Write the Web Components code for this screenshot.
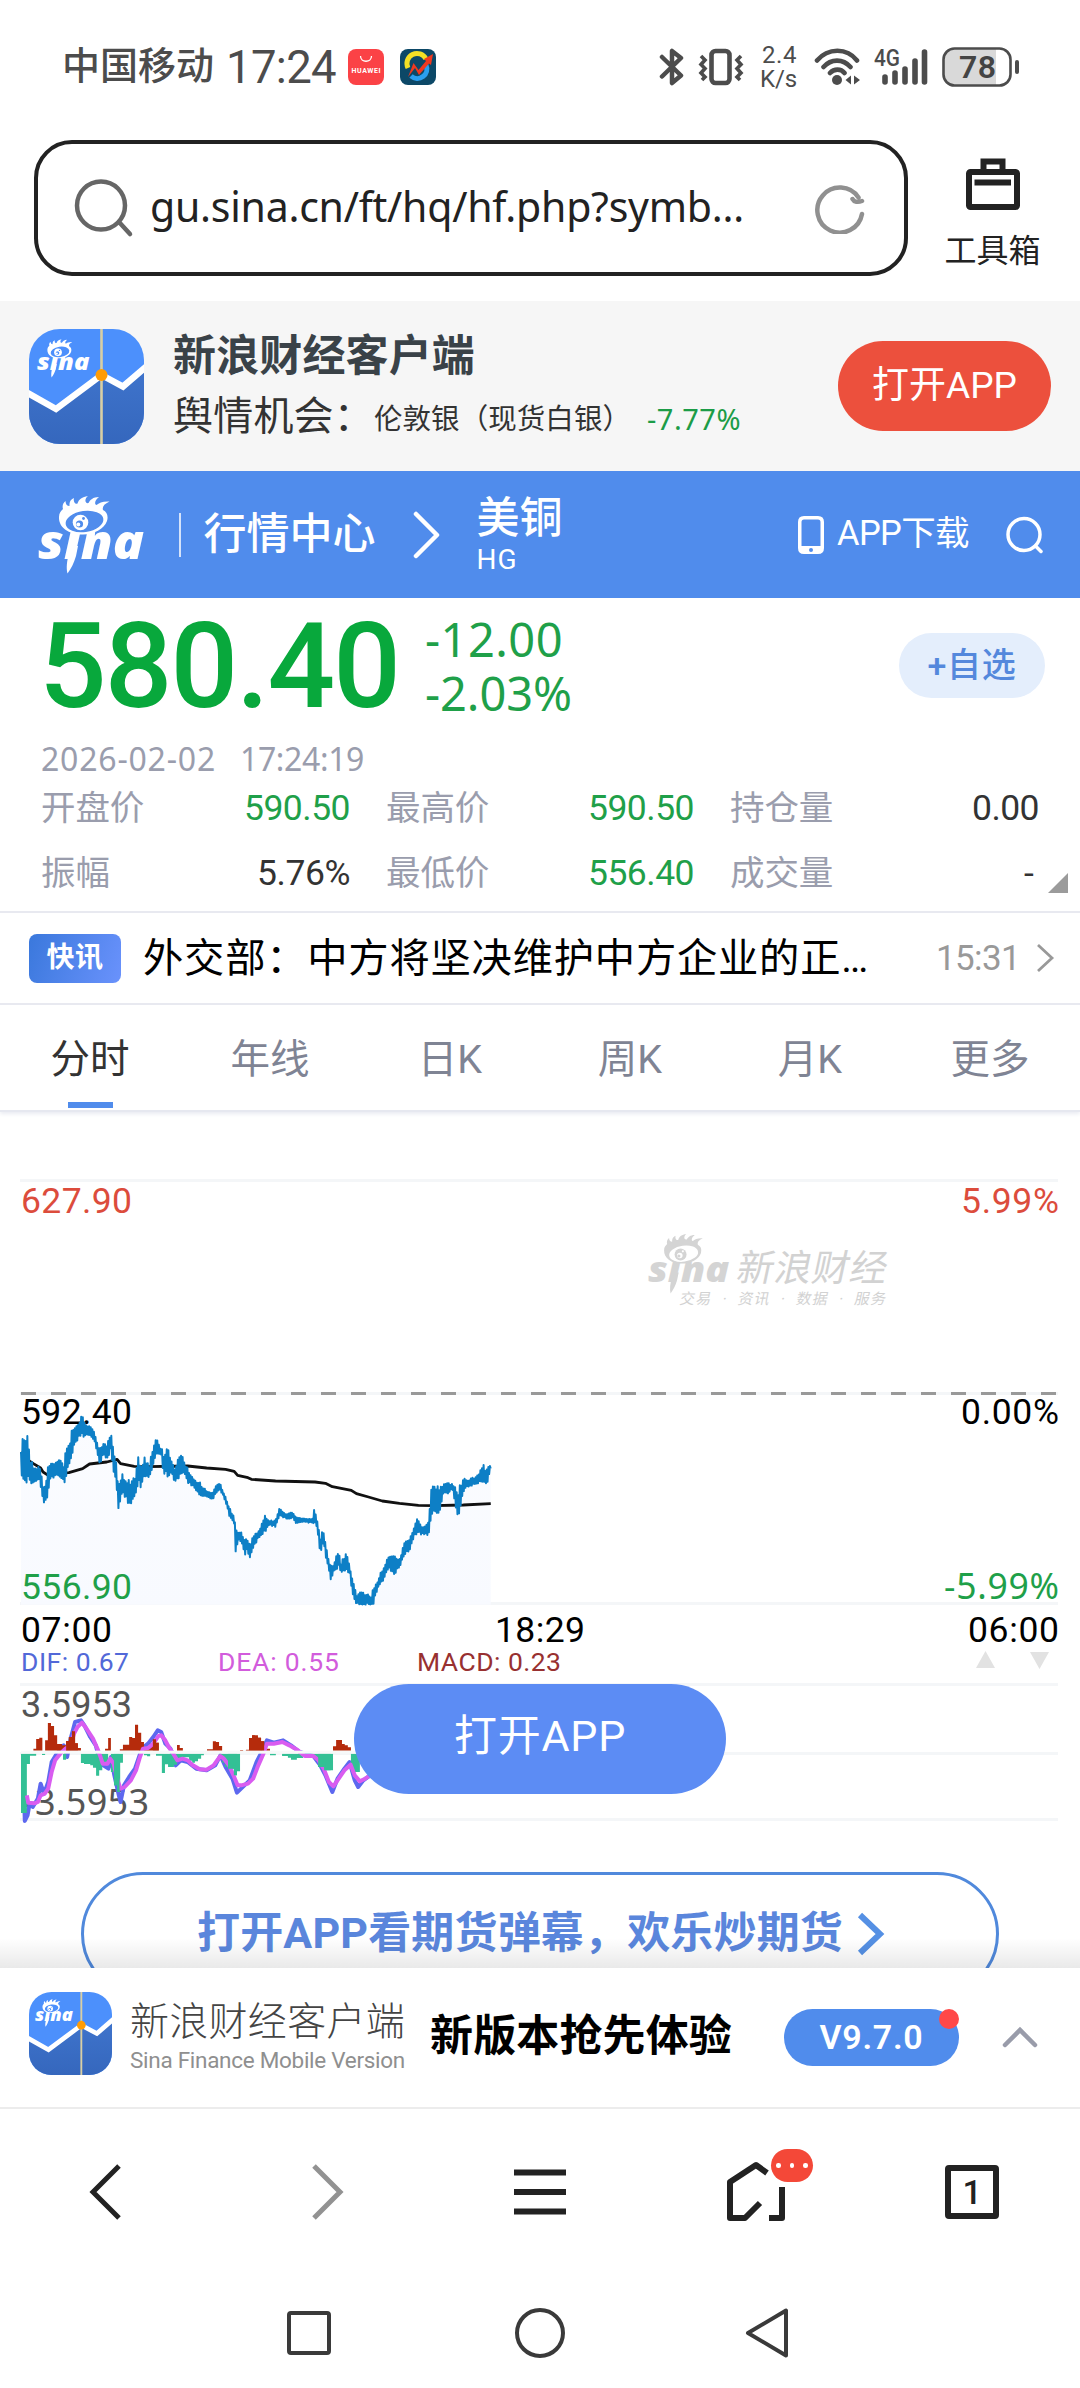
<!DOCTYPE html>
<html lang="zh-CN">
<head>
<meta charset="utf-8">
<title>美铜 HG 行情</title>
<style>
html, body { margin: 0; background: #fff; }
body { width: 1080px; height: 2388px; overflow: hidden; font-family: Roboto, "Noto Sans CJK SC", sans-serif; color: #222; }
</style>
</head>
<body>
<quote-page></quote-page>
<script>
function define(name, css, html, ready) {
  customElements.define(name, class extends HTMLElement {
    connectedCallback() {
      if (this.shadowRoot) return;
      const root = this.attachShadow({ mode: 'open' });
      root.innerHTML = '<style>:host{display:block;box-sizing:border-box}*{box-sizing:border-box}svg{display:block;flex:none}' + css + '</style>' +
        (typeof html === 'function' ? html(this) : html);
      if (ready) ready(this, root);
    }
  });
}

/* A single line of text, tracked to the advance width given in "w". "hum" picks the humanist Latin face. */
define('fit-text', ':host{display:block;flex:none;white-space:nowrap;line-height:1.2;font-size:var(--s)}:host([hum]){font-family:"Noto Sans","Noto Sans CJK SC",sans-serif}span{display:inline-block}', '<span><slot></slot></span>', (el, root) => {
  const s = root.querySelector('span');
  const w = parseFloat(el.getAttribute('w'));
  if (!w) return;
  const n = [...el.textContent].length;
  const ls = (w - s.getBoundingClientRect().width) / n;
  s.style.letterSpacing = ls + 'px';
  el.style.width = w + 'px';
});

/* Sina eye mark; --ink is the mark, --hole the colour behind it. */
define('sina-mark', ':host{flex:none}svg{width:100%;height:100%;overflow:visible}', `
<svg viewBox="0 0 107 78">
  <text x="0" y="62.5" textLength="106" lengthAdjust="spacingAndGlyphs" font-family="Open Sans" font-weight="800" font-style="italic" font-size="47" fill="var(--ink)">sina</text>
  <path d="M33 50L40 50L38 60C36 67 33 73 29.5 77.5C28 72 29 64 31 58Z" fill="var(--ink)"/>
  <path d="M45 38.5C30 38.5 20.500 31 21 21C21 17 23 15 25 13C24 10 25 7 27.500 5C27.500 8 29 10 31.500 10C31.500 6 32 4 36 2C35 5 37 9 39.500 7.500C41 3 44 1 50 0C46 3 47 8 50.500 7C52 4 55 1 61 1C57 4 56 8 58.500 9C61 7 65 5 71.500 5.500C66 8 64 11 65 14C69 16 70.500 20 69 25C66 33 56 38.500 45 38.500Z" fill="var(--ink)"/>
  <ellipse cx="46.500" cy="25.500" rx="19" ry="10.500" transform="rotate(-8 46.500 25.500)" fill="var(--hole)"/>
  <circle cx="42.500" cy="26.500" r="7.800" fill="var(--ink)"/>
  <circle cx="41.500" cy="28" r="3.600" fill="var(--hole)"/>
  <circle cx="40.300" cy="28.600" r="2" fill="var(--ink)"/>
  <circle cx="45.500" cy="22.500" r="1.400" fill="var(--hole)"/>
</svg>`);

define('app-icon', ':host{flex:none;position:relative;border-radius:27%;overflow:hidden}svg{width:100%;height:100%}sina-mark{position:absolute;left:7%;top:9%;width:46%;height:34%;--ink:#fff;--hole:#4c90fc}', `
<svg viewBox="0 0 115 115">
  <defs><linearGradient id="g" x1="0" y1="0" x2="0" y2="1"><stop offset="0" stop-color="#3f74cc"/><stop offset="1" stop-color="#3567bd"/></linearGradient></defs>
  <rect width="115" height="115" fill="#4c90fc"/>
  <path d="M0 65L27 80L72.500 46L94 59L115 38V115H0Z" fill="url(#g)"/>
  <path d="M-4 62.500L27 80L72.500 46L94 57.500L119 36" fill="none" stroke="#fff" stroke-width="6.500"/>
  <path d="M72.500 0V115" stroke="#d8cfa4" stroke-width="2.600"/>
  <circle cx="72.500" cy="46" r="6" fill="#ff9c06"/>
</svg><sina-mark></sina-mark>`);

define('status-bar', `
:host{display:flex;align-items:center;height:134px;padding:0 60px 0 62px;color:#4c4c4c}
.sp{flex:1}
.k{display:flex;flex-direction:column;margin:0 17px 0 16px;gap:0}
.k fit-text{line-height:24px}
.cell{width:54px;margin-left:13px}`, `
<fit-text w="152" style="--s:38px;font-weight:500">中国移动</fit-text>
<fit-text w="110" style="--s:45.500px;font-weight:450;margin:2px 0 0 12px">17:24</fit-text>
<svg width="36" height="38" viewBox="0 0 36 38" style="margin-left:12px"><rect y="1" width="36" height="36" rx="8" fill="#fb4246"/><path d="M12.500 8C12.500 15 23.500 15 23.500 8" fill="none" stroke="#fff" stroke-width="1.300"/><text x="3.500" y="25" font-family="Roboto" font-size="7" font-weight="700" fill="#fff" textLength="29">HUAWEI</text></svg>
<svg width="36" height="38" viewBox="0 0 36 38" style="margin-left:16px"><rect y="1" width="36" height="36" rx="8" fill="#0c4867"/><path d="M26 11A10 10 0 0 0 8 20" fill="none" stroke="#f3df25" stroke-width="5"/><path d="M26 17A9.500 9.500 0 0 1 11 28" fill="none" stroke="#2a9ff0" stroke-width="5"/><path d="M8 29L13.500 15L18.500 22L26 13L24 11L33 6L31 17L29 15.500L19 27L15 20Z" fill="#f0381f"/></svg>
<div class="sp"></div>
<svg width="25" height="38" viewBox="0 0 25 38" style="margin-right:14px" fill="none" stroke="#4c4c4c" stroke-width="4.500" stroke-linejoin="round" stroke-linecap="round"><path d="M3 9L22 27.500L13 35V24M3 28.500L22 10L13 3V14"/></svg>
<svg width="46" height="38" viewBox="0 0 46 38" fill="none" stroke="#4c4c4c"><rect x="13.500" y="3" width="18" height="32" rx="4" stroke-width="4.600"/><path d="M3 8L7 12L3 16.500L7 20.500L3 25L7 29L4 32M43 8L39 12L43 16.500L39 20.500L43 25L39 29L42 32" stroke-width="3.600"/></svg>
<div class="k"><fit-text w="35" style="--s:24px;margin-left:2px">2.4</fit-text><fit-text w="37" style="--s:24px">K/s</fit-text></div>
<svg width="47" height="38" viewBox="0 0 47 38" fill="none" stroke="#4c4c4c" stroke-width="4.600" stroke-linecap="round"><path d="M3 12.500C14-.500 33-.500 43 12.500M9.500 19C17 10.500 29 10.500 36.500 19M16 25C20 20.500 27 20.500 30.500 25"/><circle cx="23" cy="32" r="5" fill="#4c4c4c" stroke="none"/><path d="M37 27.500V36.500L31.500 32ZM40 27.500V36.500L46 32Z" fill="#4c4c4c" stroke="none"/></svg>
<svg class="cell" width="54" height="48" viewBox="0 -5 54 48"><text x="0" y="18" font-family="Roboto" font-weight="500" font-size="23" fill="#4c4c4c" textLength="26" lengthAdjust="spacingAndGlyphs">4G</text><path d="M11 29V34M21 25V34M31 21V34M41 13V34M50.500 4V34" stroke="#4c4c4c" stroke-width="5.600" stroke-linecap="round"/></svg>
<svg width="78" height="40" viewBox="0 0 78 40" style="margin-left:14px"><path d="M12 1.500H54V38.500H12C5 38.500 1.500 34 1.500 28V12C1.500 6 5 1.500 12 1.500Z" fill="#d9d9d9"/><rect x="1.500" y="1.500" width="67" height="37" rx="11" fill="none" stroke="#4c4c4c" stroke-width="2.600"/><path d="M75 15V25" stroke="#4c4c4c" stroke-width="4" stroke-linecap="round"/><text x="17" y="31" font-family="Roboto" font-weight="600" font-size="32" fill="#444" textLength="37">78</text></svg>`);

define('address-bar', `
:host{display:flex;height:167px;padding:6px 37px 0 34px;justify-content:space-between}
.box{width:874px;height:136px;border:4.500px solid #222;border-radius:38px;display:flex;align-items:center;padding:0 36px}
.tool{width:98px;display:flex;flex-direction:column;align-items:center;padding:15px 3px 0 0}`, `
<div class="box">
 <svg width="60" height="60" viewBox="0 0 60 60" fill="none" stroke="#666" stroke-width="4.500" stroke-linecap="round"><circle cx="27" cy="27.500" r="24"/><path d="M45 44L56 56"/></svg>
 <fit-text hum w="594" style="--s:41px;margin:-3px 0 0 16px">gu.sina.cn/ft/hq/hf.php?symb…</fit-text>
 <svg width="52" height="52" viewBox="0 0 52 52" style="margin-left:70px" fill="none" stroke="#909090" stroke-width="4.500" stroke-linecap="round"><path d="M48 32A22.500 22.500 0 1 1 44.500 15.500M48 19C44 20.500 40 20 38.500 17"/></svg>
</div>
<div class="tool">
 <svg width="56" height="58" viewBox="0 0 56 58" fill="none" stroke="#222" stroke-width="6"><rect x="4" y="17" width="48" height="35" rx="1.500"/><path d="M18.500 16V6.500H37.500V16M9.500 27.500H46"/></svg>
 <fit-text w="96" style="--s:32px;margin-top:19px">工具箱</fit-text>
</div>`);

define('app-banner', `
:host{display:flex;align-items:center;height:170px;padding:0 29px;background:#f6f6f6}
app-icon{width:115px;height:115px}
.t{flex:1;margin-left:29px}
.r{display:flex;align-items:center;margin-top:12px;color:#333}
.b{width:213px;height:90px;border-radius:45px;background:#ec503d;color:#fff;display:flex;align-items:center;justify-content:center}`, `
<app-icon></app-icon>
<div class="t"><fit-text w="302" style="--s:43px;line-height:50px;font-weight:700;color:#3a4248">新浪财经客户端</fit-text>
<div class="r"><fit-text w="201" style="--s:40px">舆情机会：</fit-text><fit-text w="257" style="--s:28.500px;margin-top:7px">伦敦银（现货白银）</fit-text><fit-text hum w="94" style="--s:29px;color:#1c9c47;margin:5px 0 0 16px">-7.77%</fit-text></div></div>
<div class="b"><fit-text w="145" style="--s:37px">打开APP</fit-text></div>`);

define('site-header', `
:host{display:flex;align-items:center;height:127px;padding:0 37px 0 38px;background:#508cec;color:#fff}
sina-mark{width:107px;height:78px;--ink:#fff;--hole:#508cec}
i{width:1.500px;height:44px;background:#d5e3fa;margin:0 23px 0 34px}
.n{flex:1;margin-left:36px}`, `
<sina-mark></sina-mark><i></i>
<fit-text w="172" style="--s:43px;font-weight:500">行情中心</fit-text>
<svg width="28" height="48" viewBox="0 0 28 48" style="margin-left:37px" fill="none" stroke="#fff" stroke-width="4.500" stroke-linecap="round" stroke-linejoin="round"><path d="M3 3L24 24L3 45"/></svg>
<div class="n"><fit-text w="86" style="--s:43px;line-height:50px;font-weight:500">美铜</fit-text><fit-text w="41" style="--s:28px;line-height:34px">HG</fit-text></div>
<svg width="26" height="38" viewBox="0 0 26 38"><path fill-rule="evenodd" d="M6 0H20Q26 0 26 6V32Q26 38 20 38H6Q0 38 0 32V6Q0 0 6 0ZM6 3.500Q3.500 3.500 3.500 6V30H22.500V6Q22.500 3.500 20 3.500Z" fill="#fff"/><circle cx="13" cy="34" r="2" fill="#508cec"/></svg>
<fit-text w="132" style="--s:34.500px;margin:-1px 0 0 13px">APP下载</fit-text>
<svg width="37" height="38" viewBox="0 0 37 38" style="margin-left:37px" fill="none" stroke="#fff" stroke-width="3.500" stroke-linecap="round"><circle cx="18" cy="18.500" r="16"/><path d="M29.500 30L35 35.500"/></svg>`);

define('quote-field', ':host{display:flex;justify-content:space-between;align-items:center;color:#9a9dad;height:65px}.v{color:#333}:host([down]) .v{color:#1fa049}',
  el => `<fit-text w="${el.getAttribute('label').length * 34.4}" style="--s:34.500px">${el.getAttribute('label')}</fit-text><fit-text class="v" w="${el.getAttribute('vw')}" style="--s:35.500px">${el.getAttribute('value')}</fit-text>`);

define('quote-panel', `
:host{height:315px;border-bottom:2.500px solid #e8e9f0;padding:14px 35px 0 41px}
.top{display:flex;align-items:center;height:107px}
.d{flex:1;margin-left:26px;color:#1fa049}
.p{width:146px;height:65px;border-radius:33px;background:#e4eefc;color:#5488dc;display:flex;align-items:center;justify-content:center}
.time{display:flex;gap:24px;color:#9a9dad;height:40px;align-items:center;margin-top:20px}
.grid{display:grid;grid-template-columns:309px 308px 309px;column-gap:36px;margin-top:-3px}
.w{position:relative}.w svg{position:absolute;right:-23px;bottom:13px}`, `
<div class="top"><fit-text w="360" style="--s:119px;font-weight:500;color:#08a83c;line-height:110px;margin:2px 0 0 -2px">580.40</fit-text>
<div class="d"><fit-text hum w="138" style="--s:47px;line-height:54px">-12.00</fit-text><fit-text hum w="147" style="--s:47px;line-height:54px">-2.03%</fit-text></div>
<div class="p"><fit-text w="89" style="--s:34px;font-weight:500">+自选</fit-text></div></div>
<div class="time"><fit-text hum w="175" style="--s:32px">2026-02-02</fit-text><fit-text hum w="124" style="--s:32px">17:24:19</fit-text></div>
<div class="w"><div class="grid">
<quote-field label="开盘价" value="590.50" vw="106" down></quote-field><quote-field label="最高价" value="590.50" vw="106" down></quote-field><quote-field label="持仓量" value="0.00" vw="67"></quote-field>
<quote-field label="振幅" value="5.76%" vw="93"></quote-field><quote-field label="最低价" value="556.40" vw="106" down></quote-field><quote-field label="成交量" value="-" vw="15"></quote-field>
</div><svg width="20" height="20" viewBox="0 0 20 20"><path d="M20 0V20H0Z" fill="#9b9b9b"/></svg></div>`);

define('news-flash', `
:host{display:flex;align-items:center;height:92px;border-bottom:2.500px solid #e8e9f0;padding:0 24px 0 29px;color:#000}
.b{width:92px;height:49px;border-radius:8px;background:linear-gradient(110deg,#3a78dc,#6a92fc);color:#fff;display:flex;align-items:center;justify-content:center}`, `
<div class="b"><fit-text w="57" style="--s:28px;font-weight:700">快讯</fit-text></div>
<fit-text w="726" style="--s:40.300px;margin:3px 0 0 22px">外交部：中方将坚决维护中方企业的正…</fit-text>
<fit-text w="84" style="--s:35px;color:#999;margin:2px 0 0 67px">15:31</fit-text>
<svg width="20" height="30" viewBox="0 0 20 30" style="margin-left:15px" fill="none" stroke="#999" stroke-width="2.800"><path d="M3 2L17 15L3 28"/></svg>`);

define('tab-strip', `
:host{display:grid;grid-template-columns:repeat(6,1fr);height:107px;color:#7f8494;border-bottom:2px solid #e6e8f0;box-shadow:0 2px 4px #e9ebf2}
div{position:relative;display:flex;justify-content:center;align-items:center;height:107px;font-size:39.500px;padding-bottom:7px}
.on{color:#333}.on::after{content:"";position:absolute;left:68px;bottom:4px;width:45px;height:6px;background:#508cec}`,
'<div class="on">分时</div><div>年线</div><div>日K</div><div>周K</div><div>月K</div><div>更多</div>');

/* Price envelope: x, high, low. */
const ENV = [61,210,310,65,170,310,75,150,315,80,130,300,85,220,295,95,240,310,105,255,300,115,240,300,125,300,375,135,290,365,142,225,330,150,240,285,160,240,290,175,230,285,185,250,300,192,175,310,200,190,250,210,135,215,220,125,190,238,98,165,250,120,165,268,135,165,275,150,185,288,190,250,300,180,225,312,185,240,321,135,220,330,200,270,338,240,330,345,310,390,355,275,340,365,295,350,373,290,390,385,290,355,395,270,335,402,212,300,410,255,320,420,225,290,433,250,290,445,185,260,455,170,215,468,200,220,475,205,285,488,200,285,500,240,285,510,255,305,523,205,295,535,235,270,545,255,305,560,290,315,580,300,345,600,325,345,617,330,355,630,305,330,640,305,325,655,345,360,665,375,400,680,400,430,684,430,515,692,450,475,700,445,480,710,470,525,717,465,510,726,490,530,735,460,500,750,450,470,768,395,455,780,415,430,800,415,435,812,375,405,830,395,410,850,390,410,860,405,425,885,410,420,908,410,425,914,370,425,920,410,440,930,460,520,940,440,490,950,510,550,960,550,595,970,545,570,983,495,560,990,545,575,1004,505,575,1015,545,570,1022,580,640,1035,635,668,1050,630,668,1068,635,668,1078,640,668,1085,610,665,1095,600,625,1105,570,605,1115,550,600,1130,510,560,1145,520,580,1160,530,560,1175,480,520,1190,465,505,1205,420,460,1212,405,455,1225,430,460,1245,420,460,1252,295,435,1262,305,400,1275,300,400,1285,305,345,1300,300,335,1315,305,325,1328,320,425,1335,310,400,1345,290,330,1360,290,315,1380,285,310,1390,270,305,1404,245,300,1412,260,315,1425,245,260];
function priceLine() {
  const out = [];
  let seg = 0, k = 0;
  for (let x = 61; x <= 1425; x += 2.3, k++) {
    while (seg < ENV.length - 6 && ENV[seg + 3] < x) seg += 3;
    const t = Math.min(1, (x - ENV[seg]) / (ENV[seg + 3] - ENV[seg]));
    const hi = ENV[seg + 1] + (ENV[seg + 4] - ENV[seg + 1]) * t;
    const lo = ENV[seg + 2] + (ENV[seg + 5] - ENV[seg + 2]) * t;
    const r = Math.abs(Math.sin(k * 12.9898) * 43758.5453) % 1 * .26;
    out.push(x.toFixed(1) + ' ' + (k % 2 ? lo - (lo - hi) * r : hi + (lo - hi) * r).toFixed(1));
  }
  return out.join('L');
}
/* Histogram bars: left, right, end. */
const UP = [97,105,440,105,114,411,114,123,407,131,139,415,139,148,363,148,157,372,157,166,400,166,180,426,180,192,430,192,200,417,200,209,405,209,218,388,218,226,424,226,235,438,305,314,440,314,322,408,348,357,442,357,375,428,375,384,405,384,392,408,392,401,368,401,410,392,410,418,420,418,435,435,435,444,425,444,453,412,453,461,422,514,522,429,522,531,438,601,618,442,618,627,418,627,636,420,636,645,432,697,706,444,714,723,443,723,732,408,732,740,400,740,749,404,749,758,407,758,767,418,767,775,428,775,784,440,967,976,433,976,993,414,993,1001,426,1001,1010,430,1010,1019,436];
const DN = [61,78,633,78,87,486,87,105,461,122,131,459,183,192,473,235,244,483,244,262,486,262,270,490,270,279,497,279,288,521,288,297,505,297,314,485,322,331,510,331,340,550,340,349,570,349,357,482,418,427,460,427,436,463,453,470,461,470,479,513,479,488,487,488,505,495,505,514,488,514,531,475,531,549,466,549,558,476,558,566,482,566,575,478,575,584,470,584,592,460,636,645,470,645,653,482,653,662,495,662,679,500,679,688,520,688,697,508,784,801,460,819,836,462,836,845,467,845,862,473,862,880,468,880,915,464,915,924,475,924,941,495,941,967,505,1019,1045,510];
const bars = (a, base) => { let d = ''; for (let i = 0; i < a.length; i += 3) d += `M${a[i]} ${base}V${a[i + 2]}H${a[i + 1]}V${base}Z`; return d; };

define('trend-chart', `
:host{position:relative;height:757px}
svg{width:1080px;height:757px}
text{font-family:Roboto,"Noto Sans CJK SC",sans-serif;font-size:35.500px}
.l{stroke:#f4f6f8;stroke-width:3}
.nl{vector-effect:non-scaling-stroke;fill:none;stroke-linejoin:round}
.ind text{font-size:26.500px}.m{font-size:36px;fill:#555}
.h{font-family:"Noto Sans",sans-serif}
.wm{position:absolute;left:648px;top:121px;width:82px;height:62px;--ink:#d4d4d4;--hole:#fff}
button{position:absolute;left:354px;top:572px;width:372px;height:110px;border:0;border-radius:55px;background:#5c8cf4;color:#fff;font-family:inherit;display:flex;align-items:center;justify-content:center;padding:0 0 4px}`,
() => { const p = priceLine(); return `
<svg viewBox="0 1110 1080 757">
 <defs><linearGradient id="f" x1="0" y1="0" x2="0" y2="1"><stop offset="0" stop-color="#fbfcff"/><stop offset="1" stop-color="#f8faff"/></linearGradient></defs>
 <path class="l" d="M20 1178.500H1058M20 1391.500H1058M20 1601.500H1058M20 1682.500H1058M20 1751.500H1058M20 1817.500H1058"/>
 <path d="M21 1391.500H1057" stroke="#999" stroke-width="3" stroke-dasharray="15 15"/>
 <text x="21" y="1211" fill="#dc4c3c" textLength="111">627.90</text>
 <text x="961" y="1211" fill="#dc4c3c" textLength="98">5.99%</text>
 <g transform="translate(0 1380) scale(.34439 .33333)"><path d="M${p}V668H61Z" fill="url(#f)"/></g>
 <text x="21" y="1422" textLength="111">592.40</text>
 <text x="961" y="1422" textLength="98">0.00%</text>
 <text x="21" y="1640" textLength="91">07:00</text><text x="495" y="1640" textLength="90">18:29</text><text x="968" y="1640" textLength="91">06:00</text>
 <text class="m" x="21" y="1715" textLength="111">3.5953</text><text class="m h" x="23" y="1813" textLength="126">-3.5953</text>
 <g class="ind"><text x="21" y="1669" fill="#5268d8" textLength="108">DIF: 0.67</text><text x="218" y="1669" fill="#d25cdc" textLength="121">DEA: 0.55</text><text x="417" y="1669" fill="#983030" textLength="144">MACD: 0.23</text></g>
 <path d="M976 1666L985.500 1649L995 1666ZM1030 1650H1049L1039.500 1667Z" fill="#e2e2e2"/>
 <g transform="translate(0 1380) scale(.34439 .33333)">
  <path class="nl" d="M61 210L75 230L97 245L118 258L125 270L140 280L160 275L200 272L240 260L260 246L285 243L310 240L340 232L350 245L390 253L430 254L545 252L600 258L655 262L680 268L690 280L720 287L730 292L800 297L915 300L945 304L965 314L1020 325L1035 335L1070 345L1110 357L1160 364L1215 370L1260 371L1345 369L1425 365" stroke="#111" stroke-width="2.800"/>
  <path class="nl" d="M${p}" stroke="#0d7fc6" stroke-width="2"/>
 </g>
 <text x="21" y="1597" fill="#1fa049" textLength="111">556.90</text>
 <text class="h" x="944" y="1597" fill="#1fa049" textLength="115">-5.99%</text>
 <g transform="translate(0 1600) scale(.34439 .33333)">
  <path class="nl" d="M70 585L72 657L80 640L86 605L95 615L110 590L118 545L128 575L140 540L150 480L165 455L185 430L195 465L205 410L218 360L235 355L245 370L262 405L278 430L288 470L300 490L315 500L322 465L332 520L345 580L350 600L360 550L375 525L392 500L402 470L412 440L430 425L445 405L458 385L468 390L480 425L495 440L510 490L525 475L545 480L570 500L600 505L625 490L640 460L655 495L675 530L688 572L700 560L725 535L745 480L760 450L775 415L795 422L822 415L845 430L870 450L910 462L930 490L945 520L965 570L980 530L1000 500L1015 480L1030 535L1040 555L1055 535L1075 520" stroke="#5d68ef" stroke-width="4"/>
  <path d="${bars(UP, 446)}" fill="#b52b0c"/><path d="${bars(DN, 455)}" fill="#33c095"/>
  <path class="nl" d="M78 580L82 602L100 604L110 600L118 580L130 575L140 560L150 510L160 475L175 455L190 440L205 430L215 395L225 375L238 362L250 378L270 410L285 445L292 465L298 485L312 485L320 470L330 485L340 530L350 560L362 555L380 535L395 505L405 470L415 440L430 438L445 425L460 402L468 400L480 415L490 435L500 450L515 475L530 470L545 475L560 490L580 502L600 503L620 490L640 462L650 470L665 490L680 525L690 550L700 550L720 545L735 530L750 490L765 455L775 425L795 425L820 420L840 430L865 445L885 462L910 462L925 475L940 500L955 540L968 553L980 535L1000 505L1018 488L1030 520L1045 538L1060 530L1075 520" stroke="#d95cf0" stroke-width="4"/>
  <path d="M192 446V417H200V405H209V388H218V424H226V446ZM444 446V412H453V422H461V446ZM723 446V408H732V400H749V407H758V418H767V446Z" fill="#b52b0c"/>
  <path d="M331 455V550H340V570H347V455ZM662 455V500H679V520H688V455ZM924 455V495H941V505H960V455Z" fill="#33c095"/>
  <rect x="61" y="446" width="1010" height="9" fill="#f7f9f9"/>
 </g>
 <g fill="#d2d2d2"><text x="-4" y="0" transform="translate(739 1279) skewX(-12)" style="font-size:37px" textLength="150">新浪财经</text>
 <text transform="translate(679 1302) skewX(-12)" style="font-size:15px" textLength="206" xml:space="preserve">交易  ·  资讯  ·  数据  ·  服务</text></g>
</svg>
<sina-mark class="wm"></sina-mark>
<button><fit-text w="172" style="--s:43px">打开APP</fit-text></button>`; });

define('danmu-entry', `
:host{position:relative;height:99px;overflow:hidden;padding:3px 81px 0}
.o{height:124px;border:3px solid #5089dc;border-radius:62px;display:flex;align-items:center;justify-content:center;color:#5a86dc;padding-left:2px}
.s{position:absolute;left:0;right:0;bottom:0;height:30px;background:linear-gradient(to bottom,#0000,#00000016)}`, `
<div class="o"><fit-text w="646" style="--s:43px;font-weight:700">打开APP看期货弹幕，欢乐炒期货</fit-text>
<svg width="28" height="44" viewBox="0 0 28 44" style="margin-left:14px" fill="none" stroke="#5590e4" stroke-width="6"><path d="M3 3L23 22L3 41"/></svg></div><div class="s"></div>`);

define('version-bar', `
:host{display:flex;align-items:center;height:141px;padding:0 42px 1px 29px;border-bottom:2px solid #ececec;background:#fff}
app-icon{width:83px;height:83px;margin-bottom:8px}
.n{margin-left:18px;margin-bottom:1px}
.v{position:relative;width:176px;height:57px;border-radius:29px;background:#508cec;color:#fff;margin-left:52px;display:flex;align-items:center;justify-content:center}
.v::after{content:"";position:absolute;right:0;top:0;width:20px;height:20px;border-radius:50%;background:#ff4848}`, `
<app-icon></app-icon>
<div class="n"><fit-text w="275" style="--s:39px;line-height:43px;font-weight:300;color:#444">新浪财经客户端</fit-text><fit-text w="275" style="--s:22.500px;line-height:26px;color:#8f8f8f;margin-top:3px">Sina Finance Mobile Version</fit-text></div>
<fit-text w="302" style="--s:43px;font-weight:700;color:#000;margin-left:25px">新版本抢先体验</fit-text>
<div class="v"><fit-text w="104" style="--s:34px;font-weight:600">V9.7.0</fit-text></div>
<svg width="36" height="22" viewBox="0 0 36 22" style="margin-left:43px" fill="none" stroke="#999caa" stroke-width="4.500" stroke-linecap="round"><path d="M3 19L18 4L33 19"/></svg>`);

define('browser-nav', `
:host{display:grid;grid-template-columns:repeat(5,1fr);height:166px;padding:0}
div{display:flex;align-items:center;justify-content:center;position:relative}
.b{position:absolute;left:123px;top:40px;width:42px;height:33px;border-radius:17px;background:#f44838;display:flex;gap:9px;align-items:center;justify-content:center}
.b i{width:4.500px;height:4.500px;border-radius:50%;background:#fff}
.q{width:54px;height:54px;border:6px solid #222;border-radius:4px}`, `
<div><svg width="34" height="58" viewBox="0 0 34 58" style="margin-right:7px" fill="none" stroke="#222" stroke-width="5"><path d="M31 3L5 29L31 55"/></svg></div>
<div><svg width="34" height="58" viewBox="0 0 34 58" style="margin-left:7px" fill="none" stroke="#929292" stroke-width="5"><path d="M3 3L29 29L3 55"/></svg></div>
<div><svg width="52" height="46" viewBox="0 0 52 46" fill="none" stroke="#222" stroke-width="6"><path d="M0 3.500H52M0 23H52M0 42.500H52"/></svg></div>
<div><svg width="60" height="62" viewBox="0 0 60 62" fill="none" stroke="#222" stroke-width="6" stroke-linejoin="round"><path d="M41 12L30 4L4 21V57H19L34 42M56 26V57H43"/></svg><span class="b"><i></i><i></i><i></i></span></div>
<div><div class="q"><fit-text w="19" style="--s:34px;font-weight:500;line-height:38px">1</fit-text></div></div>`);

define('system-nav', ':host{display:flex;align-items:center;justify-content:space-between;height:117px;padding:0 290px 2px 286px}', `
<svg width="46" height="46" viewBox="0 0 46 46" fill="none" stroke="#3a3a3a" stroke-width="4"><rect x="3" y="3" width="40" height="40" rx="2"/></svg>
<svg width="52" height="52" viewBox="0 0 52 52" style="margin-left:4px" fill="none" stroke="#3a3a3a" stroke-width="4"><circle cx="26" cy="26" r="23"/></svg>
<svg width="46" height="52" viewBox="0 0 46 52" fill="none" stroke="#3a3a3a" stroke-width="4" stroke-linejoin="round"><path d="M42 3.500V48.500L4 26Z"/></svg>`);

define('quote-page', ':host{width:1080px;height:2388px;overflow:hidden;background:#fff}', `
<status-bar></status-bar><address-bar></address-bar><app-banner></app-banner><site-header></site-header>
<quote-panel></quote-panel><news-flash></news-flash><tab-strip></tab-strip><trend-chart></trend-chart>
<danmu-entry></danmu-entry><version-bar></version-bar><browser-nav></browser-nav><system-nav></system-nav>`);
</script>
</body>
</html>
